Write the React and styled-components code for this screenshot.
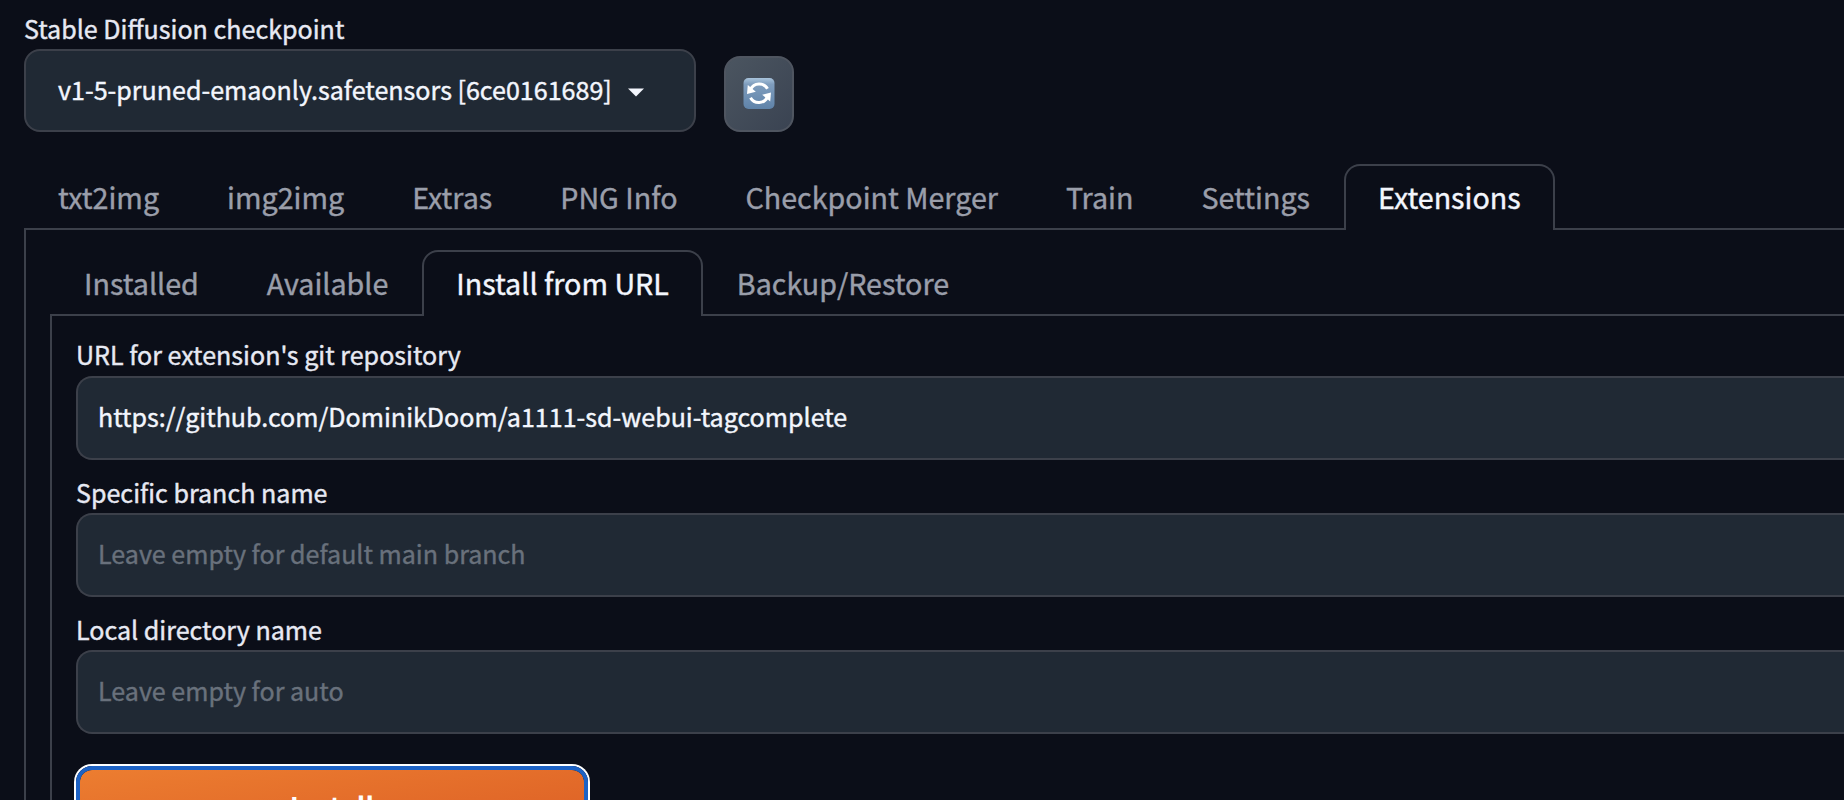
import React from 'react';
import styled, { createGlobalStyle, css } from 'styled-components';

const colors = {
  page: '#0b0e18',
  field: '#202934',
  line: '#3c404a',
  text: '#e7e9f3',
  bright: '#f3f6fd',
  muted: '#9a9eaa',
  placeholder: '#69717c',
};

const GlobalStyle = createGlobalStyle`
  * { box-sizing: border-box; }
  html, body { margin: 0; background: ${colors.page}; overflow: hidden; }
  body, input, button {
    font-family: "Noto Sans CJK SC", "Noto Sans", sans-serif;
    font-weight: 400;
  }
`;

const Page = styled.main`
  width: 1844px;
  height: 800px;
  overflow: hidden;
  padding: 7px 0 0 24px;
  background: ${colors.page};
  color: ${colors.text};
`;

const QuickSettings = styled.header`
  display: flex;
  align-items: flex-end;
  gap: 28px;
  height: 125px;
`;

const Field = styled.label`
  display: block;
  width: ${(p) => p.$width || 'auto'};
  & + & { margin-top: 11px; }
`;

const LabelText = styled.span`
  display: block;
  height: 42px;
  line-height: ${(p) => p.$line || 42}px;
  font-size: 25.07px;
  white-space: nowrap;
  -webkit-text-stroke: 0.4px currentColor;
`;

const box = css`
  border: 2px solid ${colors.line};
  border-radius: 16px;
  background: ${colors.field};
`;

const Select = styled.span`
  ${box}
  display: flex;
  align-items: center;
  gap: 16px;
  height: 83px;
  padding: 0 32px 4px;
  color: ${colors.bright};
  font-size: 25.07px;
  line-height: 40px;
  white-space: nowrap;
  -webkit-text-stroke: 0.4px currentColor;
`;

const Caret = styled.svg`
  width: 16px;
  height: 9px;
  margin-top: 7px;
  fill: ${colors.bright};
`;

const RefreshButton = styled.button`
  display: flex;
  align-items: center;
  justify-content: center;
  width: 70px;
  height: 76px;
  padding: 0 0 2px;
  border: 2px solid #4f5560;
  border-radius: 16px;
  background: linear-gradient(to bottom right, #4b5560, #3a4352);
`;

const TabBar = styled.nav`
  display: flex;
  height: 66px;
  margin-top: ${(p) => p.$top}px;
  /* the unused width to the right carries the rule on */
  &::after {
    content: '';
    flex: 1;
    border-bottom: 2px solid ${colors.line};
  }
`;

const Tab = styled.button`
  flex: none;
  height: 66px;
  padding: 2px 34px 0;
  border: 0;
  border-bottom: 2px solid ${colors.line};
  background: none;
  color: ${colors.muted};
  font-size: 28.66px;
  line-height: 60px;
  white-space: nowrap;
  -webkit-text-stroke: 0.4px currentColor;
  ${(p) => p.$active && css`
    padding: 0 32px 2px;
    border: 2px solid ${colors.line};
    border-bottom: 0;
    border-radius: 16px 16px 0 0;
    color: ${colors.bright};
  `}
`;

const Panel = styled.section`
  border-left: 2px solid ${colors.line};
  padding: ${(p) => p.$padding};
`;

const TextInput = styled.input`
  ${box}
  display: block;
  width: 100%;
  height: 84px;
  padding: 0 20px 4px;
  border-right: 0;
  border-radius: 16px 0 0 16px;
  outline: none;
  color: ${colors.bright};
  font-size: 25.07px;
  -webkit-text-stroke: 0.4px currentColor;
  &::placeholder { color: ${colors.placeholder}; opacity: 1; }
`;

const InstallButton = styled.button`
  display: block;
  width: 512px;
  height: 84px;
  margin-top: 32px;
  padding: 0 0 3px;
  border: 4px solid #1d62c4;
  border-radius: 16px;
  box-shadow: 0 0 0 2px #fff;
  background: linear-gradient(to bottom right, #ec7d30, #db5c24) padding-box;
  color: #fff;
  font-size: 27.6px;
  font-weight: 700;
  line-height: 73px;
`;

const mainTabs = ['txt2img', 'img2img', 'Extras', 'PNG Info', 'Checkpoint Merger', 'Train', 'Settings', 'Extensions'];
const extensionTabs = ['Installed', 'Available', 'Install from URL', 'Backup/Restore'];

function RefreshIcon() {
  return (
    <svg width="32" height="32" viewBox="0 0 32 32" aria-hidden="true">
      <defs>
        <linearGradient id="tile" x1="0" y1="0" x2="0" y2="1">
          <stop offset="0" stopColor="#a9c4dc" />
          <stop offset="0.2" stopColor="#7f9dbd" />
          <stop offset="1" stopColor="#5f83a9" />
        </linearGradient>
      </defs>
      <rect x="0.5" y="1" width="31" height="31" rx="5" fill="url(#tile)" />
      <g fill="none" stroke="#fff" strokeWidth="3">
        <path d="M7.5 12.5A9.6 9.6 0 0 1 24.5 11.8" />
        <path d="M24.5 20A9.6 9.6 0 0 1 7.5 20.7" />
      </g>
      <path d="M4.8 8L4 17L12.8 14.8Z" fill="#fff" />
      <path d="M27.2 24.5L28 15.5L19.2 17.7Z" fill="#fff" />
    </svg>
  );
}

function Tabs({ items, active, top }) {
  return (
    <TabBar $top={top}>
      {items.map((name) => (
        <Tab key={name} $active={name === active}>{name}</Tab>
      ))}
    </TabBar>
  );
}

export default function App() {
  return (
    <Page>
      <GlobalStyle />
      <QuickSettings>
        <Field as="div" $width="672px">
          <LabelText>Stable Diffusion checkpoint</LabelText>
          <Select>
            v1-5-pruned-emaonly.safetensors [6ce0161689]
            <Caret viewBox="0 0 16 9"><path d="M0 0.5H16L8 8.5Z" /></Caret>
          </Select>
        </Field>
        <RefreshButton aria-label="Refresh"><RefreshIcon /></RefreshButton>
      </QuickSettings>
      <Tabs items={mainTabs} active="Extensions" top={32} />
      <Panel $padding="20px 0 0 24px">
        <Tabs items={extensionTabs} active="Install from URL" top={0} />
        <Panel $padding="18px 0 0 24px">
          <Field>
            <LabelText $line={40}>URL for extension's git repository</LabelText>
            <TextInput defaultValue="https://github.com/DominikDoom/a1111-sd-webui-tagcomplete" />
          </Field>
          <Field>
            <LabelText>Specific branch name</LabelText>
            <TextInput placeholder="Leave empty for default main branch" />
          </Field>
          <Field>
            <LabelText>Local directory name</LabelText>
            <TextInput placeholder="Leave empty for auto" />
          </Field>
          <InstallButton>Install</InstallButton>
        </Panel>
      </Panel>
    </Page>
  );
}
